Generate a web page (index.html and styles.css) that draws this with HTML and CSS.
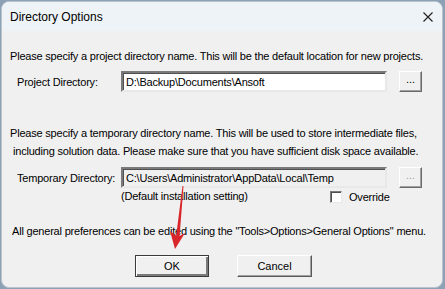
FILE: index.html
```html
<!DOCTYPE html>
<html lang="en">
  <head>
    <meta charset="UTF-8" />
    <meta name="viewport" content="width=device-width, initial-scale=1.0" />
    <title>Directory Options</title>
    <link rel="stylesheet" href="styles.css">
  </head>
  <body>
    <!-- dialog window -->
    <div class="window">
      <div class="titlebar">
        <span class="title">Directory Options</span>
        <svg class="close" width="10" height="10" viewBox="0 0 10 10">
          <path d="M0.5 0.5 L9.5 9.5 M9.5 0.5 L0.5 9.5" stroke="#1e1e1e" stroke-width="1.1" fill="none" />
        </svg>
      </div>

      <div class="content">
        <p class="note">Please specify a project directory name. This will be the default location for new projects.</p>

        <div class="dir-row">
          <label class="dir-label" for="project_dir">Project Directory:</label>
          <input type="text" class="dir-input" id="project_dir" value="D:\Backup\Documents\Ansoft" />
          <button type="button" class="browse">...</button>
        </div>

        <p class="note note-two">
          <span class="line">Please specify a temporary directory name. This will be used to store intermediate files,</span>
          <span class="line line-indent">including solution data. Please make sure that you have sufficient disk space available.</span>
        </p>

        <div class="dir-row temp-row">
          <label class="dir-label" for="temp_dir">Temporary Directory:</label>
          <input type="text" class="dir-input readonly" id="temp_dir" value="C:\Users\Administrator\AppData\Local\Temp" readonly />
          <button type="button" class="browse disabled">...</button>
        </div>

        <div class="sub-row">
          <span class="default-text">(Default installation setting)</span>
          <label class="override"><span class="checkbox"></span>Override</label>
        </div>

        <p class="note note-last">All general preferences can be edited using the "Tools&gt;Options&gt;General Options" menu.</p>

        <div class="buttons">
          <button type="button" class="btn btn-default">OK</button>
          <button type="button" class="btn">Cancel</button>
        </div>
      </div>

      <!-- red arrow pointing at OK -->
      <svg class="arrow" width="24" height="70" viewBox="0 0 24 70">
        <path d="M16.5 0 L17.5 0 L13.6 50 L19 47 L9 63 L4 45 L10.2 49.5 Z" fill="#d8262b" />
      </svg>
    </div>
  </body>
</html>
```

FILE: styles.css
```css
html,
body {
  margin: 0;
  padding: 0;
}

body {
  width: 445px;
  height: 289px;
  background: #8da1b4;
  overflow: hidden;
  font-family: "Liberation Sans", Arial, sans-serif;
}

.window {
  position: relative;
  box-sizing: border-box;
  width: 442px;
  height: 287px;
  margin: 1px 0 0 1px;
  border: 1px solid #b9c4cf;
  border-radius: 8px;
  background: #f0f0f0;
  overflow: hidden;
}

.titlebar {
  height: 29px;
  padding: 0 9px 0 8px;
  display: flex;
  align-items: center;
  justify-content: space-between;
  background: #eef3f8;
}

.title {
  font-size: 12px;
  color: #000;
  padding-top: 1px;
}

.close {
  display: block;
  margin-right: 0;
}

.content {
  padding: 18px 0 0 8px;
  font-size: 11px;
  letter-spacing: -0.2px;
  color: #000;
}

.note {
  margin: 0;
  line-height: 14px;
  white-space: nowrap;
}

.note-two {
  margin-top: 32px;
  line-height: 18px;
}

.line {
  display: block;
}

.line-indent {
  padding-left: 3px;
}

.note-last {
  margin-top: 21px;
  padding-left: 2px;
}

.dir-row {
  display: flex;
  align-items: center;
  margin-top: 8px;
  height: 21px;
}

.temp-row {
  margin-top: 7px;
}

.dir-label {
  width: 104px;
  margin-left: 7px;
  padding-top: 1px;
}

.dir-input {
  box-sizing: border-box;
  width: 266px;
  height: 21px;
  margin: 0;
  padding: 0 3px;
  font-family: inherit;
  font-size: 11px;
  letter-spacing: -0.2px;
  color: #000;
  background: #fff;
  border-style: solid;
  border-width: 2px;
  border-color: #7a7a7a #e8e8e8 #e8e8e8 #7a7a7a;
  box-shadow: inset 1px 1px 0 #505050;
  outline: none;
}

.dir-input.readonly {
  background: #f0f0f0;
}

.browse {
  box-sizing: border-box;
  width: 23px;
  height: 21px;
  margin: 0 0 0 12px;
  padding: 0 0 5px;
  font-family: inherit;
  font-size: 11px;
  letter-spacing: 0;
  color: #000;
  background: #f0f0f0;
  border-style: solid;
  border-width: 1px;
  border-color: #ffffff #6a6a6a #6a6a6a #ffffff;
  box-shadow: inset -1px -1px 0 #a0a0a0;
}

.browse.disabled {
  color: #a0a0a0;
}

.sub-row {
  display: flex;
  align-items: center;
  height: 14px;
  margin-top: 1px;
}

.default-text {
  width: 209px;
  padding-left: 111px;
}

.override {
  display: flex;
  align-items: center;
  padding-top: 2px;
}

.checkbox {
  box-sizing: border-box;
  width: 12px;
  height: 12px;
  margin-right: 7px;
  background: #fff;
  border-style: solid;
  border-width: 1px;
  border-color: #7a7a7a #e8e8e8 #e8e8e8 #7a7a7a;
  box-shadow: inset 1px 1px 0 #505050;
}

.buttons {
  display: flex;
  gap: 28px;
  margin-top: 17px;
  padding-left: 125px;
}

.btn {
  box-sizing: border-box;
  width: 75px;
  height: 22px;
  margin: 0;
  padding: 0;
  font-family: inherit;
  font-size: 11px;
  letter-spacing: 0;
  color: #000;
  background: #f0f0f0;
  border-style: solid;
  border-width: 1px;
  border-color: #ffffff #5a5a5a #5a5a5a #ffffff;
  box-shadow: inset -1px -1px 0 #a0a0a0;
}

.btn-default {
  width: 74px;
  border-color: #3a3a3a;
  box-shadow: inset 1px 1px 0 #ffffff, inset -2px -2px 0 #7a7a7a;
}

.arrow {
  position: absolute;
  left: 164px;
  top: 184px;
}
```
